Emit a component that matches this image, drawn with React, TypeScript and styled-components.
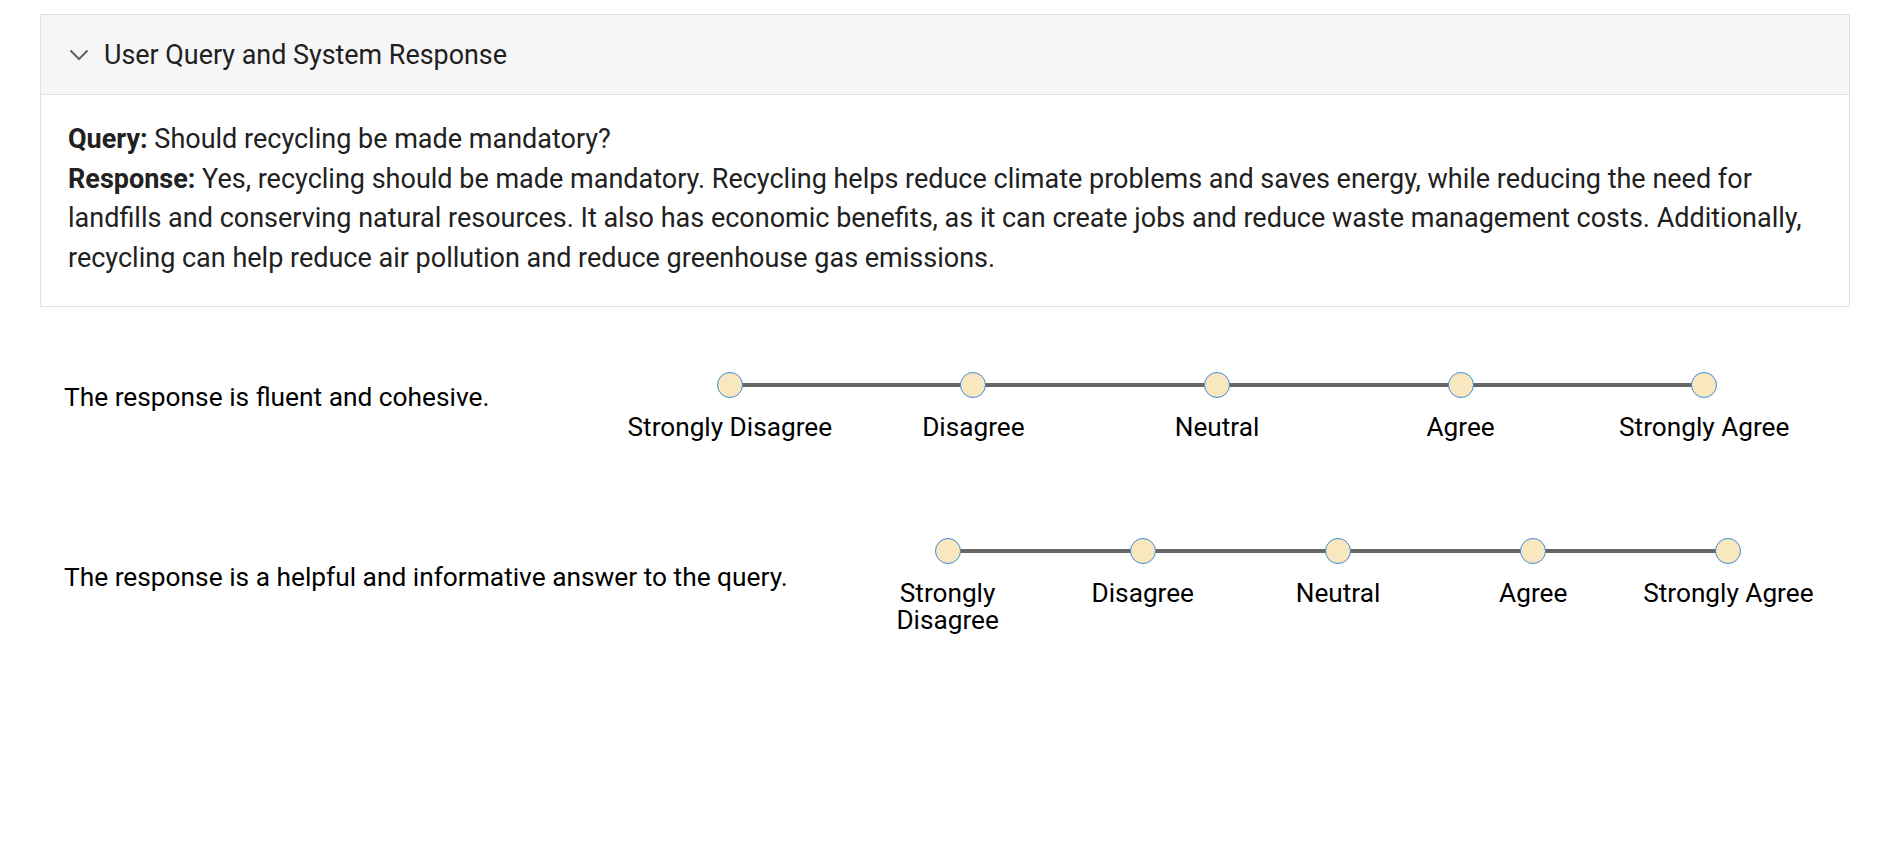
import React from "react";
import styled, { createGlobalStyle } from "styled-components";

const GlobalStyle = createGlobalStyle`
  body {
    margin: 0;
    background: #ffffff;
    font-family: Roboto, "Liberation Sans", Arial, sans-serif;
  }
`;

const OPTIONS = [
  "Strongly Disagree",
  "Disagree",
  "Neutral",
  "Agree",
  "Strongly Agree",
];

const STATEMENTS = [
  { text: "The response is fluent and cohesive.", scaleWidth: 1218 },
  {
    text: "The response is a helpful and informative answer to the query.",
    scaleWidth: 976,
  },
];

const Page = styled.div`
  padding: 14px 40px 40px;
`;

const Panel = styled.section`
  border: 1px solid #e0e0e0;
  background: #ffffff;
`;

const PanelHeader = styled.div`
  display: flex;
  align-items: center;
  gap: 15px;
  height: 80px;
  box-sizing: border-box;
  padding: 0 28px;
  background: #f6f6f6;
  border-bottom: 1px solid #e0e0e0;
  font-size: 26.9px;
  color: #212121;
`;

const PanelBody = styled.div`
  padding: 25px 27px 28px;
  font-size: 27px;
  line-height: 39.5px;
  color: #212121;
`;

const Line = styled.p`
  margin: 0;
`;

const Ratings = styled.div`
  display: flex;
  flex-direction: column;
  gap: 97px;
  padding: 65px 24px 0 24px;
`;

const RatingRow = styled.div`
  display: flex;
  align-items: center;
`;

const Statement = styled.div`
  flex: 1;
  padding-bottom: 18px;
  font-size: 26.3px;
  line-height: 27px;
  color: #000000;
`;

const Scale = styled.div<{ $width: number }>`
  position: relative;
  display: grid;
  grid-template-columns: repeat(5, 1fr);
  width: ${(p) => p.$width}px;
`;

const Track = styled.div`
  position: absolute;
  left: 10%;
  right: 10%;
  top: 11px;
  height: 4px;
  background: #666666;
`;

const Option = styled.label`
  position: relative;
  display: flex;
  flex-direction: column;
  align-items: center;
  gap: 16px;
  font-size: 26.2px;
  line-height: 27px;
  color: #000000;
  text-align: center;
`;

const Dot = styled.span`
  width: 26px;
  height: 26px;
  box-sizing: border-box;
  border-radius: 50%;
  border: 1px solid #3a8dd3;
  background: #f9e8bf;
`;

const Chevron = () => (
  <svg width="20" height="12" viewBox="0 0 20 12" fill="none">
    <polyline
      points="1.5,1.5 10,10 18.5,1.5"
      stroke="#616161"
      strokeWidth="2"
    />
  </svg>
);

export default function App() {
  return (
    <Page>
      <GlobalStyle />
      <Panel>
        <PanelHeader>
          <Chevron />
          <span>User Query and System Response</span>
        </PanelHeader>
        <PanelBody>
          <Line>
            <b>Query:</b> Should recycling be made mandatory?
          </Line>
          <Line>
            <b>Response:</b> Yes, recycling should be made mandatory. Recycling
            helps reduce climate problems and saves energy, while reducing the
            need for landfills and conserving natural resources. It also has
            economic benefits, as it can create jobs and reduce waste management
            costs. Additionally, recycling can help reduce air pollution and
            reduce greenhouse gas emissions.
          </Line>
        </PanelBody>
      </Panel>
      <Ratings>
        {STATEMENTS.map((s) => (
          <RatingRow key={s.text}>
            <Statement>{s.text}</Statement>
            <Scale $width={s.scaleWidth}>
              <Track />
              {OPTIONS.map((o) => (
                <Option key={o}>
                  <Dot />
                  {o}
                </Option>
              ))}
            </Scale>
          </RatingRow>
        ))}
      </Ratings>
    </Page>
  );
}
